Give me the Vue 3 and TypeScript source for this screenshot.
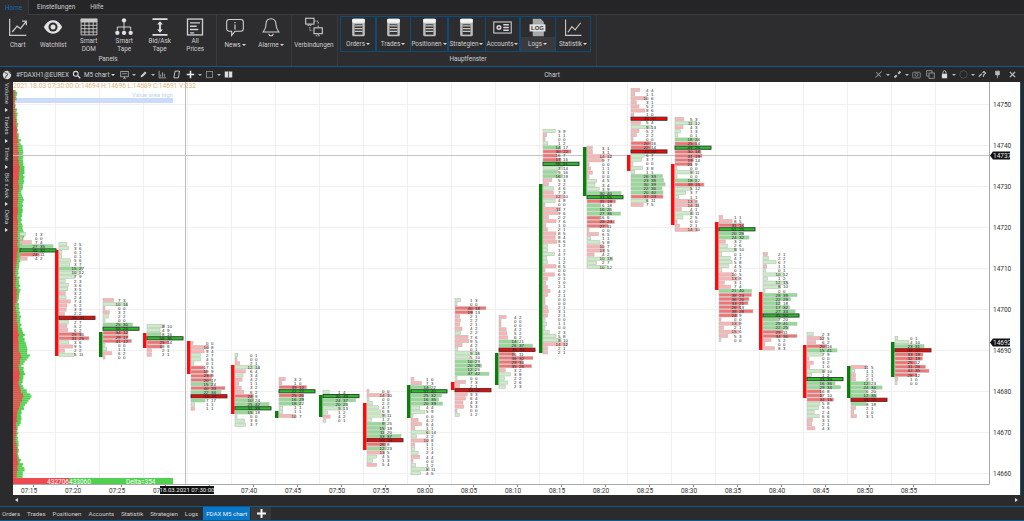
<script setup lang="ts">
interface Btn { label: string; icon: string; menu?: boolean; hover?: boolean; w?: number }
interface Candle {
  t: string
  gx: number
  top: number
  bottom: number
  body?: [number, number]
  up?: boolean
  pocs: [number, boolean][]
  hot: [number, number][]
}
interface Row { key: string; y: number; x: number; w: number; cls: string; bid: number; ask: number }

const doc = '<rect x="4" y="1" width="16" height="22" rx="2" fill="#bdbdbd"/><rect x="4" y="1" width="16" height="5" rx="1.5" fill="#f2f2f2"/><rect x="7" y="8" width="10" height="13" fill="#333"/><path d="M7 10h10M7 13.5h10M7 17h10" stroke="#c8c8c8" stroke-width="1.6"/>'
const icons: Record<string, string> = {
  chart: '<path d="M2 2v20h20M5 18l6-7 4 3 6-8M17 5h5v5" fill="none" stroke="#c8c8c8" stroke-width="1.5"/>',
  eye: '<path d="M1 12c4-7 8-8 11-8s7 1 11 8c-4 7-8 8-11 8s-7-1-11-8z" fill="#e2e2e2"/><circle cx="12" cy="12" r="5.4" fill="#2d2d30"/><circle cx="12" cy="12" r="3" fill="#e2e2e2"/>',
  grid: '<path d="M2.5 2.5h19v19h-19zM2.5 6h19M2.5 10h19M2.5 14h19M2.5 18h19M7 6v15.5M12 6v15.5M17 6v15.5" fill="none" stroke="#c8c8c8" stroke-width="1.1"/><rect x="2" y="2" width="20" height="4" fill="#c8c8c8"/>',
  tree: '<circle cx="12" cy="4" r="2.6" fill="#e0e0e0"/><circle cx="4" cy="19" r="2.6" fill="#e0e0e0"/><circle cx="12" cy="19" r="2.6" fill="#e0e0e0"/><circle cx="20" cy="19" r="2.6" fill="#e0e0e0"/><path d="M12 6v10M4 16v-4h16v4" fill="none" stroke="#d0d0d0" stroke-width="1.2"/>',
  bidask: '<path d="M3 2.5h18M3 21.5h18" stroke="#e0e0e0" stroke-width="2"/><path d="M12 5l3.5 4h-2.4v6h2.4L12 19l-3.5-4h2.4V9H8.500z" fill="#e0e0e0"/>',
  prices: '<rect x="3" y="2.500" width="18" height="19" fill="none" stroke="#d0d0d0" stroke-width="1.6"/><path d="M6 7h12M6 11h8M6 15h10M6 19h5" stroke="#d0d0d0" stroke-width="1.7"/>',
  news: '<path d="M5 3h14a3 3 0 0 1 3 3v8a3 3 0 0 1-3 3h-7l-4 5v-5H5a3 3 0 0 1-3-3V6a3 3 0 0 1 3-3z" fill="none" stroke="#d0d0d0" stroke-width="1.3"/><path d="M12 9v6M12 6v1.600" stroke="#d0d0d0" stroke-width="1.400"/>',
  bell: '<path d="M12 2c-4 0-6 3-6 7 0 5-2 7-3.500 9h19c-1.500-2-3.500-4-3.500-9 0-4-2-7-6-7zM9.500 20a2.500 2.500 0 0 0 5 0" fill="none" stroke="#d0d0d0" stroke-width="1.300"/>',
  conn: '<rect x="2" y="1.500" width="10" height="7" fill="none" stroke="#d0d0d0" stroke-width="1.300"/><rect x="12" y="13" width="10" height="7" fill="none" stroke="#d0d0d0" stroke-width="1.300"/><path d="M7 8.500v1.500M4 10h6M17 20v2M14 22.500h6M12 5h5v3M17 10v3M7 12v4h3" fill="none" stroke="#d0d0d0" stroke-width="1" stroke-dasharray="2 1"/>',
  doc,
  card: '<rect x="1" y="5" width="22" height="14" fill="none" stroke="#d8d8d8" stroke-width="1.300"/><circle cx="7.500" cy="12" r="3.200" fill="#d8d8d8"/><circle cx="7.500" cy="12" r="1.300" fill="#333"/><path d="M13 8.500h7M13 12h7M13 15.500h7" stroke="#d8d8d8" stroke-width="1.800"/>',
  log: '<path d="M6 1h10l4 4v18H6z" fill="#a8a8a8"/><rect x="2" y="8" width="20" height="9" fill="#e2e2e2"/><text x="12" y="15.200" text-anchor="middle" font-size="7.500" font-weight="700" font-family="Liberation Sans, sans-serif" fill="#333">LOG</text>',
  stat: '<path d="M2 2v20h20M5 18l5-7 4 4 7-9" fill="none" stroke="#c8c8c8" stroke-width="1.400"/>',
}

const panels: Btn[] = [
  { label: 'Chart', icon: 'chart' },
  { label: 'Watchlist', icon: 'eye' },
  { label: 'Smart\nDOM', icon: 'grid' },
  { label: 'Smart\nTape', icon: 'tree' },
  { label: 'Bid/Ask\nTape', icon: 'bidask' },
  { label: 'All\nPrices', icon: 'prices' },
]
const mainWindows: Btn[] = [
  { label: 'Orders', icon: 'doc', menu: true, w: 36 },
  { label: 'Trades', icon: 'doc', menu: true, w: 35 },
  { label: 'Positionen', icon: 'doc', menu: true, w: 38 },
  { label: 'Strategien', icon: 'doc', menu: true, w: 38 },
  { label: 'Accounts', icon: 'card', menu: true, w: 35 },
  { label: 'Logs', icon: 'log', menu: true, hover: true, w: 36 },
  { label: 'Statistik', icon: 'stat', menu: true, w: 36 },
]
const sideTabs = ['Volume', 'Trades', 'Time', 'Bid x Ask', 'Delta']
const bottomTabs = ['Orders', 'Trades', 'Positionen', 'Accounts', 'Statistik', 'Strategien', 'Logs']

const candles: Candle[] = [
  { t: '07:15', gx: 16, top: 234, bottom: 262, pocs: [[251, true]], hot: [[246, 258]] },
  { t: '07:20', gx: 55, top: 244, bottom: 355, body: [250, 356], up: false, pocs: [[318, false]], hot: [[268, 272], [334, 342]] },
  { t: '07:25', gx: 99, top: 300, bottom: 360, body: [332, 357], up: true, pocs: [[330, true]], hot: [[322, 342]] },
  { t: '07:30', gx: 143, top: 326, bottom: 357, body: [333, 348], up: false, pocs: [[338, true]], hot: [[334, 348]] },
  { t: '07:35', gx: 187, top: 343, bottom: 412, body: [341, 374], up: false, pocs: [[396, false]], hot: [[364, 402]] },
  { t: '07:40', gx: 231, top: 355, bottom: 425, body: [365, 414], up: false, pocs: [[408, true]], hot: [[392, 414]] },
  { t: '07:45', gx: 275, top: 379, bottom: 419, body: [411, 418], up: true, pocs: [[392, true]], hot: [[386, 406]] },
  { t: '07:50', gx: 319, top: 392, bottom: 421, body: [395, 417], up: true, pocs: [[397, true]], hot: [[393, 408]] },
  { t: '07:55', gx: 363, top: 391, bottom: 465, body: [403, 450], up: false, pocs: [[441, false]], hot: [[420, 450]] },
  { t: '08:00', gx: 407, top: 379, bottom: 475, body: [385, 418], up: true, pocs: [[392, true]], hot: [[386, 404]] },
  { t: '08:05', gx: 451, top: 300, bottom: 417, body: [382, 390], up: false, pocs: [[392, false]], hot: [[358, 376], [308, 316]] },
  { t: '08:10', gx: 495, top: 317, bottom: 390, body: [353, 385], up: true, pocs: [[351, false]], hot: [[340, 368]] },
  { t: '08:15', gx: 539, top: 131, bottom: 355, body: [184, 353], up: true, pocs: [[165, true]], hot: [[146, 160], [170, 178]] },
  { t: '08:20', gx: 583, top: 148, bottom: 270, body: [147, 196], up: true, pocs: [[199, true]], hot: [[190, 226]] },
  { t: '08:25', gx: 627, top: 90, bottom: 207, body: [155, 171], up: false, pocs: [[120, false], [153, false]], hot: [[140, 152], [176, 200]] },
  { t: '08:30', gx: 671, top: 119, bottom: 233, body: [164, 225], up: false, pocs: [[149, true]], hot: [[136, 165], [178, 186]] },
  { t: '08:35', gx: 715, top: 217, bottom: 340, body: [222, 290], up: false, pocs: [[231, true]], hot: [[225, 240], [290, 316]] },
  { t: '08:40', gx: 759, top: 254, bottom: 352, body: [292, 350], up: false, pocs: [[314, true]], hot: [[294, 340]] },
  { t: '08:45', gx: 803, top: 334, bottom: 430, body: [345, 398], up: false, pocs: [[380, true]], hot: [[344, 352], [376, 402]] },
  { t: '08:50', gx: 847, top: 367, bottom: 418, body: [366, 398], up: true, pocs: [[400, false]], hot: [[382, 406]] },
  { t: '08:55', gx: 891, top: 338, bottom: 385, body: [342, 377], up: true, pocs: [[351, false]], hot: [[345, 376]] },
]

let seed = 20210318
function rnd(): number {
  seed = (seed * 1664525 + 1013904223) % 4294967296
  return seed / 4294967296
}

const rows: Row[] = []
candles.forEach((c, ci) => {
  let i = 0
  let greenRow = rnd() > 0.5
  const pocs = [...c.pocs]
  for (let y = c.top; y <= c.bottom + 0.1; y += 4.1) {
    const idx = pocs.findIndex((p) => Math.abs(p[0] - y) <= 2.05)
    const isHot = c.hot.some((h) => y >= h[0] && y <= h[1])
    const big = isHot ? 16 + rnd() * 26 : rnd() * rnd() * 18
    const small = big * (0.3 + rnd() * 0.6)
    if (rnd() < 0.3) greenRow = !greenRow
    let bid = Math.round(greenRow ? small : big)
    let ask = Math.round(greenRow ? big : small)
    let w = (bid + ask) * (isHot ? 0.5 : 0.85) + 2
    let cls = (greenRow ? 'g' : 'r') + (isHot ? 'm' : 'l')
    if (idx >= 0) {
      cls = pocs[idx][1] ? 'pg' : 'pr'
      w = 36
      bid = 30 + Math.round(rnd() * 30)
      ask = 25 + Math.round(rnd() * 30)
      pocs.splice(idx, 1)
    }
    rows.push({ key: `${ci}-${i++}`, y, x: c.gx + 4, w: Math.min(w, 34), cls, bid, ask })
    if (idx >= 0) rows[rows.length - 1].w = 36
  }
})

interface Seg { y: number; r: number; t: number }
const envelope: [number, number, number][] = [
  [90, 1, 2], [105, 1, 2], [115, 2, 3], [130, 3, 4], [140, 4, 6], [150, 5, 9], [160, 5, 9], [170, 6, 10], [180, 5, 9],
  [190, 5, 8], [200, 4, 9], [215, 4, 7], [225, 4, 8], [235, 4, 10], [250, 4, 8], [260, 3, 6], [270, 2, 4], [280, 2, 5],
  [290, 3, 6], [305, 2, 4], [315, 3, 6], [325, 4, 7], [335, 5, 10], [345, 5, 12], [350, 5, 13], [355, 8, 15], [365, 5, 8],
  [372, 6, 10], [384, 5, 8], [392, 8, 14], [395, 10, 18], [400, 8, 14], [410, 4, 8], [420, 3, 6], [435, 2, 3], [450, 3, 4],
  [460, 4, 6], [466, 4, 10], [478, 3, 8],
]
const profile: Seg[] = []
for (let y = 90; y < 478; y += 2.05) {
  const n = envelope.findIndex((e) => e[0] >= y)
  const b = envelope[Math.max(n, 1)]
  const a = envelope[Math.max(n, 1) - 1]
  const k = (y - a[0]) / (b[0] - a[0])
  profile.push({
    y,
    r: a[1] + (b[1] - a[1]) * k + rnd() * 1.2,
    t: a[2] + (b[2] - a[2]) * k + rnd() * 2.2,
  })
}

const priceLabels = [14750, 14740, 14730, 14720, 14710, 14700, 14690, 14680, 14670, 14660]
const priceY = (p: number) => 104 + (14750 - p) * 4.1
const gridX = Array.from({ length: 21 }, (_, i) => 55 + i * 44)
</script>

<template>
  <div class="app">
    <div class="menu-tabs">
      <span class="menu-tab menu-tab--active">Home</span>
      <span class="menu-tab">Einstellungen</span>
      <span class="menu-tab">Hilfe</span>
    </div>

    <div class="ribbon">
      <section class="group group--panels">
        <div class="group__btns">
          <button v-for="b in panels" :key="b.label" class="rb rb--panel">
            <svg class="rb__ico" viewBox="0 0 24 24" v-html="icons[b.icon]" />
            <span class="rb__label">{{ b.label }}</span>
          </button>
        </div>
        <div class="group__name">Panels</div>
      </section>
      <section class="group group--news">
        <div class="group__btns">
          <button class="rb rb--news">
            <svg class="rb__ico" viewBox="0 0 24 24" v-html="icons.news" />
            <span class="rb__label">News<i class="caret" /></span>
          </button>
          <button class="rb rb--news">
            <svg class="rb__ico" viewBox="0 0 24 24" v-html="icons.bell" />
            <span class="rb__label">Alarme<i class="caret" /></span>
          </button>
        </div>
      </section>
      <section class="group group--conn">
        <button class="rb rb--conn">
          <svg class="rb__ico" viewBox="0 0 24 24" v-html="icons.conn" />
          <span class="rb__label">Verbindungen</span>
        </button>
      </section>
      <section class="group group--main">
        <div class="group__btns group__btns--main">
          <button
            v-for="b in mainWindows"
            :key="b.label"
            class="rb rb--main"
            :class="{ 'rb--hover': b.hover }"
            :style="{ width: b.w + 'px' }"
          >
            <svg class="rb__ico" viewBox="0 0 24 24" v-html="icons[b.icon]" />
            <span class="rb__label">{{ b.label }}<i class="caret" /></span>
          </button>
        </div>
        <div class="group__name">Hauptfenster</div>
      </section>
    </div>

    <div class="chart-win">
      <div class="toolbar">
        <div class="toolbar__left">
          <svg class="tool tool--globe" viewBox="0 0 12 12">
            <circle cx="6" cy="6" r="5" fill="#d8d8d8" />
            <path d="M3 3l3 1 1 2-2 1-1 3M8 1.500l1 2 2 1" fill="none" stroke="#333" stroke-width="1" />
          </svg>
          <span class="toolbar__sym">#FDAXH1@EUREX</span>
          <svg class="tool" viewBox="0 0 12 12">
            <circle cx="5" cy="5" r="3.200" fill="none" stroke="#ddd" stroke-width="1.400" />
            <path d="M7.500 7.500l3.500 3.500" stroke="#ddd" stroke-width="1.800" />
          </svg>
          <span class="toolbar__sym toolbar__sym--tf">M5 chart<i class="caret" /></span>
          <svg class="tool" viewBox="0 0 12 12">
            <rect x="1" y="2" width="10" height="7" fill="none" stroke="#bbb" />
            <path d="M3 5h6M6 9v2M4 11h4" stroke="#bbb" />
          </svg>
          <i class="caret caret--tool" />
          <svg class="tool" viewBox="0 0 12 12"><path d="M2 10l1-3 5-5 2 2-5 5z" fill="#ccc" /></svg>
          <i class="caret caret--tool" />
          <svg class="tool" viewBox="0 0 12 12"><path d="M1.500 1v9.500H11M3.500 9V6M6 9V3M8.500 9V5" fill="none" stroke="#bbb" /></svg>
          <svg class="tool tool--gap" viewBox="0 0 12 12"><path d="M4 1.500h6L8.500 10.500H2.500z" fill="none" stroke="#ccc" stroke-width="1.200" /></svg>
          <svg class="tool tool--gap" viewBox="0 0 12 12"><path d="M6 1v10M1 6h10" stroke="#eee" stroke-width="2" /></svg>
          <i class="caret caret--tool" />
          <svg class="tool" viewBox="0 0 12 12"><rect x="2" y="2" width="8" height="8" fill="none" stroke="#888" stroke-width="1.200" /></svg>
          <i class="caret caret--tool" />
          <svg class="tool" viewBox="0 0 12 12"><rect x="1" y="2" width="10" height="8" fill="#ddd" /><rect x="5.500" y="2" width="1" height="8" fill="#333" /></svg>
        </div>
        <div class="toolbar__title">Chart</div>
        <div class="toolbar__right">
          <svg class="tool" viewBox="0 0 12 12"><path d="M2 10L10 2M3 3l6 6" stroke="#999" stroke-width="1.400" /></svg>
          <i class="caret caret--tool" />
          <svg class="tool" viewBox="0 0 12 12"><path d="M2 10l3-3M7 5l3-3" stroke="#bbb" stroke-width="2.500" /></svg>
          <i class="caret caret--tool" />
          <svg class="tool" viewBox="0 0 12 12"><rect x="1" y="3" width="10" height="7.500" rx="1" fill="none" stroke="#999" /><circle cx="6" cy="6.500" r="2" fill="none" stroke="#999" /></svg>
          <svg class="tool tool--gap" viewBox="0 0 12 12"><rect x="1" y="1" width="7" height="7" fill="none" stroke="#aaa" /><rect x="4" y="4" width="7" height="7" fill="#2a2a2c" stroke="#aaa" /></svg>
          <svg class="tool tool--gap" viewBox="0 0 12 12"><rect x="2.500" y="5" width="7" height="6" fill="#ddd" /><path d="M4 5V3a2 2 0 0 1 4 0v2" fill="none" stroke="#ddd" /></svg>
          <i class="caret caret--tool" />
          <svg class="tool" viewBox="0 0 12 12"><circle cx="6" cy="6" r="5" fill="none" stroke="#555" /></svg>
          <i class="caret caret--tool" />
          <svg class="tool" viewBox="0 0 12 12"><path d="M1 9l4-4M6 4l2-2 2 2-2 2-1 3" fill="none" stroke="#bbb" stroke-width="1.600" /></svg>
          <svg class="tool tool--pin" viewBox="0 0 12 12"><path d="M3.500 1.500h5v5h-5zM6 6.500V11" fill="#bbb" stroke="#bbb" /></svg>
          <svg class="tool tool--pin" viewBox="0 0 12 12"><path d="M2.500 2.500l7 7M9.500 2.500l-7 7" stroke="#ccc" stroke-width="1.500" /></svg>
        </div>
      </div>

      <div class="chart-body">
        <div class="side">
          <div v-for="s in sideTabs" :key="s" class="side__item">
            <span class="side__text">{{ s }}</span>
            <i class="side__tri" />
          </div>
        </div>

        <svg class="plot" viewBox="13 82 1007 413" width="1007" height="413">
          <rect x="13" y="82" width="1007" height="413" fill="#fff" />
          <g stroke="#f3eef0" stroke-width="1">
            <line v-for="x in gridX" :key="x" :x1="x + 0.5" :x2="x + 0.5" y1="82" y2="484" />
            <line v-for="p in priceLabels" :key="p" x1="13" x2="989" :y1="Math.round(priceY(p)) + 0.5" :y2="Math.round(priceY(p)) + 0.5" />
          </g>

          <text class="ohlc" x="13" y="88">2021.18.03 07:30:00 O:14694 H:14696 L:14689 C:14691 V:232</text>
          <rect x="14" y="98" width="159" height="5" fill="#cbdcfa" />
          <text class="vah" x="173" y="97" text-anchor="end">Value area high</text>

          <g v-for="s in profile" :key="s.y">
            <rect x="13" :y="s.y" :width="s.t" height="2.100" fill="#4fd04f" />
            <rect x="13" :y="s.y" :width="s.r" height="2.100" fill="#ee4a50" />
          </g>

          <line x1="185.500" x2="185.500" y1="82" y2="484" stroke="#bdbdbd" />
          <line x1="13" x2="989" y1="155.500" y2="155.500" stroke="#c4c4c4" />

          <template v-for="c in candles" :key="c.t">
            <rect
              v-if="c.body"
              :x="c.gx"
              :y="c.body[0]"
              width="3.600"
              :height="c.body[1] - c.body[0]"
              :fill="c.up ? '#078107' : '#ff0a0a'"
            />
          </template>

          <template v-for="r in rows" :key="r.key">
            <rect class="bar" :class="'bar--' + r.cls" :x="r.x" :y="r.y - 1.600" :width="r.w" height="3.200" />
            <text class="num" :x="r.x + 17.500" :y="r.y + 1.600" text-anchor="end">{{ r.bid }}</text>
            <text class="num" :x="r.x + 20" :y="r.y + 1.600">{{ r.ask }}</text>
          </template>

          <rect x="13" y="478" width="56" height="6" fill="#ee4a50" />
          <rect x="69" y="478" width="104" height="6" fill="#4fd04f" />
          <text class="foot" x="69" y="483.800" text-anchor="end">432706</text>
          <text class="foot" x="69" y="483.800">433060</text>
          <text class="foot" x="126" y="483.800">Delta=354</text>

          <line x1="13" x2="989.500" y1="484.500" y2="484.500" stroke="#a8a8a8" />
          <line x1="989.500" x2="989.500" y1="82" y2="484.500" stroke="#a8a8a8" />

          <template v-for="(c, i) in candles" :key="'t' + c.t">
            <line :x1="33.500 + i * 44" :x2="33.500 + i * 44" y1="485" y2="487" stroke="#888" />
            <text class="axis" :x="29 + i * 44" y="492.500" text-anchor="middle">{{ c.t }}</text>
          </template>
          <rect x="160" y="486" width="54" height="8" fill="#111" />
          <text class="axis axis--tag axis--date" x="187" y="492.300" text-anchor="middle">18.03.2021 07:30:00</text>

          <text v-for="p in priceLabels" :key="'p' + p" class="axis" x="993" :y="priceY(p) + 2.500">{{ p }}</text>
          <path d="M990 155.500l3-4h17v8h-17z" fill="#111" />
          <text class="axis axis--tag" x="993" y="158">14737</text>
          <path d="M990 342.500l3-4h17v8h-17z" fill="#111" />
          <text class="axis axis--tag" x="993" y="345">14692</text>
        </svg>

        <div class="right-gap" />
      </div>

      <div class="scroll-row">
        <i class="tri tri--l" />
        <i class="scroll-row__thumb" />
        <i class="tri tri--r" />
      </div>
    </div>

    <div class="bottom-tabs">
      <span v-for="t in bottomTabs" :key="t" class="b-tab">{{ t }}</span>
      <span class="b-tab b-tab--active">FDAX M5 chart</span>
      <span class="b-tab b-tab--add">
        <svg viewBox="0 0 10 10" width="9" height="9"><path d="M5 0v10M0 5h10" stroke="#fff" stroke-width="2.200" /></svg>
      </span>
    </div>
  </div>
</template>

<style scoped>
.app {
  display: flex;
  flex-direction: column;
  width: 1024px;
  height: 521px;
  overflow: hidden;
  background: #2d2d30;
  font-family: Roboto, "Liberation Sans", sans-serif;
  font-size: 6.400px;
  color: #cfcfcf;
}

.menu-tabs {
  display: flex;
  flex-shrink: 0;
  height: 15px;
  border-bottom: 1px solid #3c3c3f;
  box-sizing: border-box;
  background: #252528;
}

.menu-tab {
  display: flex;
  align-items: center;
  margin-left: 8px;
  margin-right: 7px;
}

.menu-tab--active {
  width: 29px;
  box-sizing: border-box;
  margin-left: 0;
  margin-right: 0;
  padding-left: 5px;
  color: #0f6cb0;
  background: #2d2d30;
  border-right: 1px solid #3c3c3f;
  margin-bottom: -1px;
}

.ribbon {
  display: flex;
  flex-shrink: 0;
  height: 51px;
  background: #2d2d30;
}

.group {
  position: relative;
  display: flex;
  flex-direction: column;
  box-sizing: border-box;
  border-right: 1px solid #3a3a3d;
}

.group--panels { width: 217px; }
.group--news { width: 75px; }
.group--conn { width: 46px; }
.group--main { width: 259px; padding-left: 2px; }

.group__btns {
  display: flex;
  height: 38px;
}

.group__btns--main {
  margin-top: 1px;
  height: 36px;
}

.group__name {
  text-align: center;
  line-height: 12px;
}

.group--main .group__name {
  margin-top: 1px;
}

.rb {
  display: flex;
  flex-direction: column;
  align-items: center;
  padding: 2px 0 0;
  background: none;
  border: 0;
  color: inherit;
  font: inherit;
}

.rb--panel { width: 35.500px; }
.rb--news { width: 36px; }
.rb--conn { width: 46px; margin-left: -1px; }

.rb--main {
  padding: 1px 0 0;
  box-sizing: border-box;
  border: 1px solid #0d4b78;
  margin-right: -0.500px;
}

.rb--hover .rb__label {
  background: #3a3a3d;
  align-self: stretch;
}

.rb__ico {
  flex-shrink: 0;
  width: 20px;
  height: 20px;
}

.rb--main .rb__ico {
  width: 19px;
  height: 19px;
}

.rb__label {
  display: flex;
  flex: 1;
  align-items: center;
  justify-content: center;
  line-height: 8px;
  text-align: center;
  white-space: pre-line;
}

.rb--main .rb__label {
  white-space: nowrap;
}

.rb--news .rb__label,
.rb--conn .rb__label {
  flex: 0 0 16px;
  white-space: nowrap;
}

.caret {
  display: inline-block;
  flex-shrink: 0;
  margin-left: 1px;
  border-left: 2.500px solid transparent;
  border-right: 2.500px solid transparent;
  border-top: 2.500px solid #ddd;
  vertical-align: middle;
}

.caret--tool {
  margin: 0 3px 0 2px;
  border-top-color: #bbb;
}

.chart-win {
  display: flex;
  flex-direction: column;
  flex-shrink: 0;
  height: 440px;
  box-sizing: border-box;
  border-top: 1px solid #0f5a8c;
  background: #2b2b2e;
}

.toolbar {
  display: flex;
  flex-shrink: 0;
  align-items: center;
  height: 15px;
  background: #28282a;
}

.toolbar__left {
  display: flex;
  align-items: center;
  width: 528px;
  padding-left: 2px;
  box-sizing: border-box;
}

.toolbar__sym {
  margin: 0 3px 0 3px;
  white-space: nowrap;
}

.toolbar__sym--tf {
  margin: 0 5px 0 2px;
}

.toolbar__title {
  width: 48px;
  text-align: center;
}

.toolbar__right {
  display: flex;
  flex: 1;
  align-items: center;
  justify-content: flex-end;
  padding-right: 6px;
}

.tool {
  flex-shrink: 0;
  width: 9px;
  height: 9px;
  margin-right: 1px;
}

.tool--globe {
  width: 10px;
  height: 10px;
}

.tool--gap {
  margin-left: 4px;
}

.tool--pin {
  margin-left: 5px;
}

.chart-body {
  display: flex;
  flex-shrink: 0;
  height: 413px;
}

.side {
  display: flex;
  flex-direction: column;
  flex-shrink: 0;
  width: 13px;
  padding-top: 1px;
  align-items: center;
  font-size: 6.200px;
  background: #2b2b2e;
}

.side__item {
  display: flex;
  flex-direction: column;
  align-items: center;
  margin-bottom: 4px;
}

.side__text {
  writing-mode: vertical-rl;
  line-height: 9px;
}

.side__tri {
  margin-top: 4px;
  border-top: 2px solid transparent;
  border-bottom: 2px solid transparent;
  border-left: 3px solid #ddd;
}

.plot {
  display: block;
  flex-shrink: 0;
}

.right-gap {
  flex: 1;
  border-left: 1px solid #0f5a8c;
}

.bar {
  stroke: #bdbdbd;
  stroke-width: 0.6;
}

.bar--rl { fill: #ffb3b3; }
.bar--rm { fill: #f47272; }
.bar--gl { fill: #c9eec4; }
.bar--gm { fill: #90dc90; }
.bar--pr { fill: #ff0000; stroke: #333; stroke-width: 0.9; }
.bar--pg { fill: #24c024; stroke: #333; stroke-width: 0.9; }

.num {
  font: 4.400px "Liberation Sans", sans-serif;
  fill: #222;
}

.ohlc {
  font: 6.600px Roboto, "Liberation Sans", sans-serif;
  fill: #e2b479;
}

.vah {
  font: 6px Roboto, "Liberation Sans", sans-serif;
  fill: #c0d2f2;
}

.foot {
  font: 6.500px Roboto, "Liberation Sans", sans-serif;
  fill: #fff;
}

.axis {
  font: 6.500px Roboto, "Liberation Sans", sans-serif;
  fill: #333;
}

.axis--tag {
  fill: #eee;
}

.axis--date {
  font-size: 6px;
}

.scroll-row {
  display: flex;
  flex-shrink: 0;
  align-items: center;
  height: 10px;
  padding: 0 6px 0 15px;
}

.scroll-row__thumb {
  flex: 1;
}

.tri {
  border-top: 2px solid transparent;
  border-bottom: 2px solid transparent;
}

.tri--l { border-right: 3px solid #ddd; }
.tri--r { border-left: 3px solid #ddd; }

.bottom-tabs {
  display: flex;
  flex-shrink: 0;
  align-items: stretch;
  height: 15px;
  box-sizing: border-box;
  padding-left: 2px;
  font-size: 6.100px;
  border-top: 1px solid #0f5a8c;
  border-bottom: 1px solid #0f5a8c;
  background: #2b2b2e;
}

.b-tab {
  display: flex;
  align-items: center;
  margin-right: 7px;
  white-space: nowrap;
}

.b-tab--active {
  margin-right: 1px;
  margin-left: -2px;
  padding: 0 3px;
  color: #eaf4fc;
  background: #0a76c6;
}

.b-tab--add {
  justify-content: center;
  width: 20px;
  background: #37373a;
}
</style>

<style>
html, body {
  margin: 0;
  background: #2d2d30;
}
</style>
